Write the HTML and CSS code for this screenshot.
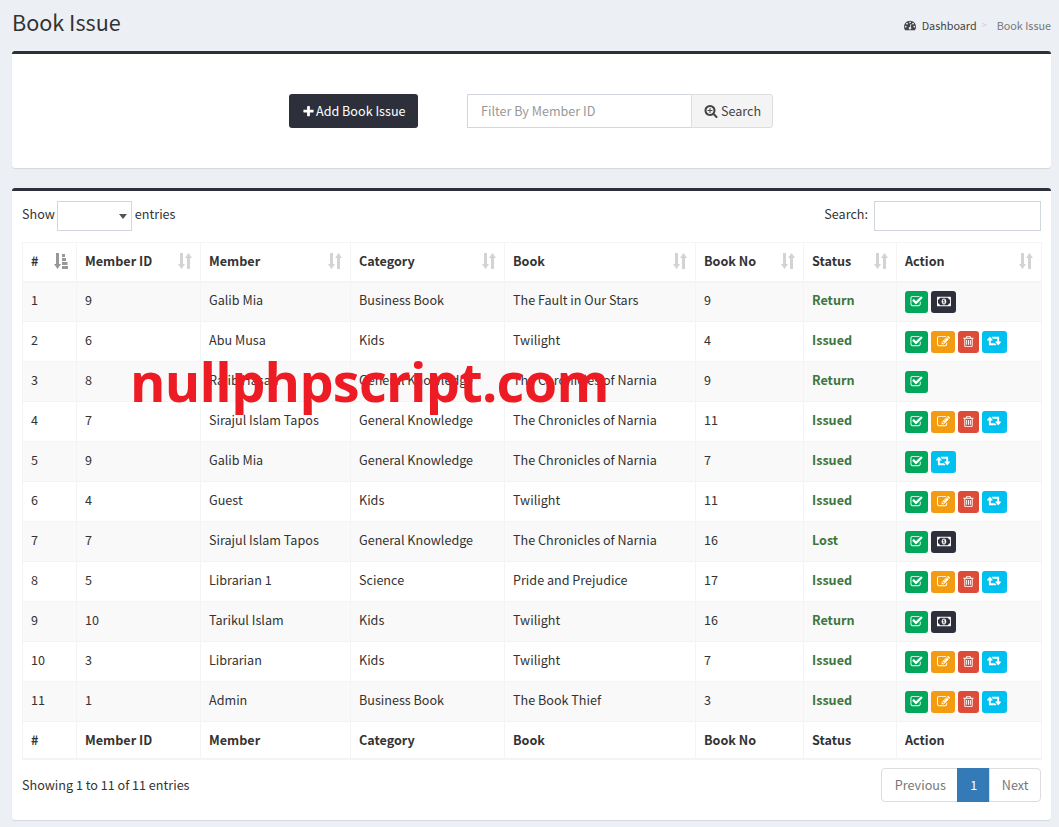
FILE: index.html
```html
<!DOCTYPE html>
<html lang="en">
<head>
  <meta charset="UTF-8">
  <meta name="viewport" content="width=device-width, initial-scale=1.0">
  <title>Book Issue</title>
  <link rel="stylesheet" href="styles.css">
</head>
<body>
  <!-- icon set, reused through <use> -->
  <svg class="defs" aria-hidden="true">
    <symbol id="i-plus" viewBox="0 0 1792 1792"><path d="M1600 736v192q0 40-28 68t-68 28h-416v416q0 40-28 68t-68 28h-192q-40 0-68-28t-28-68v-416h-416q-40 0-68-28t-28-68v-192q0-40 28-68t68-28h416v-416q0-40 28-68t68-28h192q40 0 68 28t28 68v416h416q40 0 68 28t28 68z"/></symbol>
    <symbol id="i-search" viewBox="0 0 1792 1792"><path d="M1088 800v64q0 13-9.5 22.5t-22.5 9.5h-224v224q0 13-9.5 22.5t-22.5 9.5h-64q-13 0-22.5-9.5t-9.5-22.5v-224h-224q-13 0-22.5-9.5t-9.5-22.5v-64q0-13 9.5-22.5t22.5-9.5h224v-224q0-13 9.5-22.5t22.5-9.5h64q13 0 22.5 9.5t9.5 22.5v224h224q13 0 22.5 9.5t9.5 22.5zm128 32q0-185-131.5-316.5t-316.5-131.5-316.5 131.5-131.5 316.5 131.5 316.5 316.5 131.5 316.5-131.5 131.5-316.5zm512 832q0 53-37.5 90.5t-90.5 37.5q-54 0-90-38l-343-342q-179 124-399 124-143 0-273.5-55.5t-225-150-150-225-55.5-273.5 55.5-273.5 150-225 225-150 273.5-55.5 273.5 55.5 225 150 150 225 55.5 273.5q0 220-124 399l343 343q37 37 37 90z"/></symbol>
    <symbol id="i-dash" viewBox="0 0 1792 1792"><path d="M384 1152q0-53-37.5-90.5t-90.5-37.5-90.5 37.5-37.5 90.5 37.5 90.5 90.5 37.5 90.5-37.5 37.5-90.5zm192-448q0-53-37.5-90.5t-90.5-37.5-90.5 37.5-37.5 90.5 37.5 90.5 90.5 37.5 90.5-37.5 37.5-90.5zm428 506l101-382q6-26-7.5-48.5t-38.5-29.5-48 6.5-30 39.5l-101 382q-60 5-107 43.5t-63 98.5q-20 77 20 146t117 89 146-20 89-117q16-60-6-117t-72-91zm660-58q0-53-37.5-90.5t-90.5-37.5-90.5 37.5-37.5 90.5 37.5 90.5 90.5 37.5 90.5-37.5 37.5-90.5zm-640-640q0-53-37.5-90.5t-90.5-37.5-90.5 37.5-37.5 90.5 37.5 90.5 90.5 37.5 90.5-37.5 37.5-90.5zm448 192q0-53-37.5-90.5t-90.5-37.5-90.5 37.5-37.5 90.5 37.5 90.5 90.5 37.5 90.5-37.5 37.5-90.5zm320 448q0 261-141 483-19 29-54 29h-1402q-35 0-54-29-141-221-141-483 0-182 71-348t191-286 286-191 348-71 348 71 286 191 191 286 71 348z"/></symbol>
    <symbol id="i-check" viewBox="0 0 1792 1792"><path d="M1472 930v318q0 119-84.5 203.5t-203.5 84.5h-832q-119 0-203.5-84.5t-84.5-203.5v-832q0-119 84.5-203.5t203.5-84.5h832q63 0 117 25 15 7 18 23 3 17-9 29l-49 49q-10 10-23 10-3 0-9-2-23-6-45-6h-832q-66 0-113 47t-47 113v832q0 66 47 113t113 47h832q66 0 113-47t47-113v-254q0-13 9-22l64-64q10-10 23-10 6 0 12 3 20 8 20 29zm231-489l-814 814q-24 24-57 24t-57-24l-430-430q-24-24-24-57t24-57l110-110q24-24 57-24t57 24l263 263 647-647q24-24 57-24t57 24l110 110q24 24 24 57t-24 57z"/></symbol>
    <symbol id="i-edit" viewBox="0 0 1792 1792"><path d="M888 1184l116-116-152-152-116 116v56h96v96h56zm440-720q-16-16-33 1l-350 350q-17 17-1 33t33-1l350-350q17-17 1-33zm80 594v190q0 119-84.5 203.5t-203.5 84.5h-832q-119 0-203.5-84.5t-84.5-203.5v-832q0-119 84.5-203.5t203.5-84.5h832q63 0 117 25 15 7 18 23 3 17-9 29l-49 49q-14 14-32 8-23-6-45-6h-832q-66 0-113 47t-47 113v832q0 66 47 113t113 47h832q66 0 113-47t47-113v-126q0-13 9-22l64-64q15-15 35-7t20 29zm-96-738l288 288-672 672h-288v-288zm444 132l-92 92-288-288 92-92q28-28 68-28t68 28l152 152q28 28 28 68t-28 68z"/></symbol>
    <symbol id="i-trash" viewBox="0 0 1792 1792"><path d="M704 736v576q0 14-9 23t-23 9h-64q-14 0-23-9t-9-23v-576q0-14 9-23t23-9h64q14 0 23 9t9 23zm256 0v576q0 14-9 23t-23 9h-64q-14 0-23-9t-9-23v-576q0-14 9-23t23-9h64q14 0 23 9t9 23zm256 0v576q0 14-9 23t-23 9h-64q-14 0-23-9t-9-23v-576q0-14 9-23t23-9h64q14 0 23 9t9 23zm128 724v-948h-896v948q0 22 7 40.5t14.5 27 10.5 8.5h832q3 0 10.5-8.5t14.5-27 7-40.5zm-672-1076h448l-48-117q-7-9-17-11h-317q-10 2-17 11zm928 32v64q0 14-9 23t-23 9h-96v948q0 83-47 143.5t-113 60.5h-832q-66 0-113-58.5t-47-141.5v-952h-96q-14 0-23-9t-9-23v-64q0-14 9-23t23-9h309l70-167q15-37 54-63t79-26h320q40 0 79 26t54 63l70 167h309q14 0 23 9t9 23z"/></symbol>
    <symbol id="i-retweet" viewBox="0 0 1920 1792"><path d="M1216 1376q0 13-9.5 22.5t-22.5 9.5h-960q-8 0-13.5-2t-9-7-5.5-8-3-11.5-1-11.5v-600h-192q-26 0-45-19t-19-45q0-24 15-41l320-384q19-22 49-22t49 22l320 384q15 17 15 41 0 26-19 45t-45 19h-192v384h576q16 0 25 11l160 192q7 10 7 21zm640-416q0 24-15 41l-320 384q-20 23-49 23t-49-23l-320-384q-15-17-15-41 0-26 19-45t45-19h192v-384h-576q-16 0-25-12l-160-192q-7-9-7-20 0-13 9.5-22.5t22.5-9.5h960q8 0 13.5 2t9 7 5.5 8 3 11.5 1 11.5v600h192q26 0 45 19t19 45z"/></symbol>
    <symbol id="i-money" viewBox="0 0 1920 1792"><path d="M832 1152h384v-96h-128v-448h-114l-148 137 77 80q42-37 55-57h2v288h-128v96zm512-256q0 70-21 142t-59.500 134-101.500 101-138 39-138-39-101.500-101-59.500-134-21-142 21-142 59.500-134 101.500-101 138-39 138 39 101.500 101 59.500 134 21 142zm512 256v-512q-106 0-181-75t-75-181h-1152q0 106-75 181t-181 75v512q106 0 181 75t75 181h1152q0-106 75-181t181-75zm128-832v1152q0 26-19 45t-45 19h-1792q-26 0-45-19t-19-45v-1152q0-26 19-45t45-19h1792q26 0 45 19t19 45z"/></symbol>
    <symbol id="i-sort" viewBox="0 0 14 16"><path d="M2 0h3v11h2L3.500 16 0 11h2zM9 16h3V5h2L10.500 0 7 5h2z"/></symbol>
    <symbol id="i-sort-asc" viewBox="0 0 14 16"><path d="M2 0h3v11h2L3.500 16 0 11h2zM8 1h3v3H8zM8 5h4v3H8zM8 9h5.500v3H8zM8 13h6v3H8z"/></symbol>
  </svg>

  <section class="page-head">
    <h1>Book Issue</h1>
    <ol class="breadcrumb">
      <li><a href="#"><svg class="ico ico-dash"><use href="#i-dash"/></svg>Dashboard</a></li>
      <li class="sep">&gt;</li>
      <li class="current">Book Issue</li>
    </ol>
  </section>

  <div class="box box-filter">
    <a class="btn-add" href="#"><svg class="ico ico-plus"><use href="#i-plus"/></svg>Add Book Issue</a>
    <form class="filter">
      <input type="text" placeholder="Filter By Member ID">
      <button type="button"><svg class="ico ico-search"><use href="#i-search"/></svg>Search</button>
    </form>
  </div>

  <div class="box box-table">
    <div class="tools">
      <label>Show <span class="select"><select><option></option></select></span> entries</label>
      <label class="tools-search">Search: <input type="search"></label>
    </div>

    <table>
      <colgroup>
        <col class="c-no"><col class="c-mid"><col class="c-member"><col class="c-cat">
        <col class="c-book"><col class="c-bno"><col class="c-status"><col class="c-action">
      </colgroup>
      <thead>
        <tr>
          <th><span class="th-in">#<svg class="sort sorted"><use href="#i-sort-asc"/></svg></span></th>
          <th><span class="th-in">Member ID<svg class="sort"><use href="#i-sort"/></svg></span></th>
          <th><span class="th-in">Member<svg class="sort"><use href="#i-sort"/></svg></span></th>
          <th><span class="th-in">Category<svg class="sort"><use href="#i-sort"/></svg></span></th>
          <th><span class="th-in">Book<svg class="sort"><use href="#i-sort"/></svg></span></th>
          <th><span class="th-in">Book No<svg class="sort"><use href="#i-sort"/></svg></span></th>
          <th><span class="th-in">Status<svg class="sort"><use href="#i-sort"/></svg></span></th>
          <th><span class="th-in">Action<svg class="sort"><use href="#i-sort"/></svg></span></th>
        </tr>
      </thead>
      <tbody>
        <tr>
          <td>1</td><td>9</td><td>Galib Mia</td><td>Business Book</td><td>The Fault in Our Stars</td><td>9</td>
          <td class="status">Return</td>
          <td><div class="acts">
            <a class="act green"><svg><use href="#i-check"/></svg></a>
            <a class="act dark"><svg class="money"><use href="#i-money"/></svg></a>
          </div></td>
        </tr>
        <tr>
          <td>2</td><td>6</td><td>Abu Musa</td><td>Kids</td><td>Twilight</td><td>4</td>
          <td class="status">Issued</td>
          <td><div class="acts">
            <a class="act green"><svg><use href="#i-check"/></svg></a>
            <a class="act orange"><svg><use href="#i-edit"/></svg></a>
            <a class="act red"><svg><use href="#i-trash"/></svg></a>
            <a class="act blue"><svg class="retweet"><use href="#i-retweet"/></svg></a>
          </div></td>
        </tr>
        <tr>
          <td>3</td><td>8</td><td>Rajib Hasan</td><td>General Knowledge</td><td>The Chronicles of Narnia</td><td>9</td>
          <td class="status">Return</td>
          <td><div class="acts">
            <a class="act green"><svg><use href="#i-check"/></svg></a>
          </div></td>
        </tr>
        <tr>
          <td>4</td><td>7</td><td>Sirajul Islam Tapos</td><td>General Knowledge</td><td>The Chronicles of Narnia</td><td>11</td>
          <td class="status">Issued</td>
          <td><div class="acts">
            <a class="act green"><svg><use href="#i-check"/></svg></a>
            <a class="act orange"><svg><use href="#i-edit"/></svg></a>
            <a class="act red"><svg><use href="#i-trash"/></svg></a>
            <a class="act blue"><svg class="retweet"><use href="#i-retweet"/></svg></a>
          </div></td>
        </tr>
        <tr>
          <td>5</td><td>9</td><td>Galib Mia</td><td>General Knowledge</td><td>The Chronicles of Narnia</td><td>7</td>
          <td class="status">Issued</td>
          <td><div class="acts">
            <a class="act green"><svg><use href="#i-check"/></svg></a>
            <a class="act blue"><svg class="retweet"><use href="#i-retweet"/></svg></a>
          </div></td>
        </tr>
        <tr>
          <td>6</td><td>4</td><td>Guest</td><td>Kids</td><td>Twilight</td><td>11</td>
          <td class="status">Issued</td>
          <td><div class="acts">
            <a class="act green"><svg><use href="#i-check"/></svg></a>
            <a class="act orange"><svg><use href="#i-edit"/></svg></a>
            <a class="act red"><svg><use href="#i-trash"/></svg></a>
            <a class="act blue"><svg class="retweet"><use href="#i-retweet"/></svg></a>
          </div></td>
        </tr>
        <tr>
          <td>7</td><td>7</td><td>Sirajul Islam Tapos</td><td>General Knowledge</td><td>The Chronicles of Narnia</td><td>16</td>
          <td class="status">Lost</td>
          <td><div class="acts">
            <a class="act green"><svg><use href="#i-check"/></svg></a>
            <a class="act dark"><svg class="money"><use href="#i-money"/></svg></a>
          </div></td>
        </tr>
        <tr>
          <td>8</td><td>5</td><td>Librarian 1</td><td>Science</td><td>Pride and Prejudice</td><td>17</td>
          <td class="status">Issued</td>
          <td><div class="acts">
            <a class="act green"><svg><use href="#i-check"/></svg></a>
            <a class="act orange"><svg><use href="#i-edit"/></svg></a>
            <a class="act red"><svg><use href="#i-trash"/></svg></a>
            <a class="act blue"><svg class="retweet"><use href="#i-retweet"/></svg></a>
          </div></td>
        </tr>
        <tr>
          <td>9</td><td>10</td><td>Tarikul Islam</td><td>Kids</td><td>Twilight</td><td>16</td>
          <td class="status">Return</td>
          <td><div class="acts">
            <a class="act green"><svg><use href="#i-check"/></svg></a>
            <a class="act dark"><svg class="money"><use href="#i-money"/></svg></a>
          </div></td>
        </tr>
        <tr>
          <td>10</td><td>3</td><td>Librarian</td><td>Kids</td><td>Twilight</td><td>7</td>
          <td class="status">Issued</td>
          <td><div class="acts">
            <a class="act green"><svg><use href="#i-check"/></svg></a>
            <a class="act orange"><svg><use href="#i-edit"/></svg></a>
            <a class="act red"><svg><use href="#i-trash"/></svg></a>
            <a class="act blue"><svg class="retweet"><use href="#i-retweet"/></svg></a>
          </div></td>
        </tr>
        <tr>
          <td>11</td><td>1</td><td>Admin</td><td>Business Book</td><td>The Book Thief</td><td>3</td>
          <td class="status">Issued</td>
          <td><div class="acts">
            <a class="act green"><svg><use href="#i-check"/></svg></a>
            <a class="act orange"><svg><use href="#i-edit"/></svg></a>
            <a class="act red"><svg><use href="#i-trash"/></svg></a>
            <a class="act blue"><svg class="retweet"><use href="#i-retweet"/></svg></a>
          </div></td>
        </tr>
      </tbody>
      <tfoot>
        <tr>
          <th>#</th><th>Member ID</th><th>Member</th><th>Category</th><th>Book</th><th>Book No</th><th>Status</th><th>Action</th>
        </tr>
      </tfoot>
    </table>

    <div class="table-foot">
      <div class="info">Showing 1 to 11 of 11 entries</div>
      <ul class="pager">
        <li><a href="#">Previous</a></li>
        <li class="active"><a href="#">1</a></li>
        <li><a href="#">Next</a></li>
      </ul>
    </div>
  </div>

  <!-- stamped over the screenshot -->
  <div class="watermark">nullphpscript.com</div>
</body>
</html>
```

FILE: styles.css
```css
* {
  box-sizing: border-box;
}
html, body {
  height: 827px;
  overflow: hidden;
}
body {
  position: relative;
  margin: 0;
  padding: 0 8px 0 12px;
  background-color: #ecf0f5;
  color: #333;
  font-family: "Noto Sans CJK SC", "Source Sans Pro", "Open Sans", sans-serif;
  font-size: 12.6px;
  line-height: 20px;
}
a {
  color: inherit;
  text-decoration: none;
}
.defs {
  display: none;
}
.ico {
  fill: currentColor;
  flex: none;
}

/* page heading */
.page-head {
  display: flex;
  justify-content: space-between;
  align-items: center;
  height: 51px;
  padding-bottom: 7px;
}
h1 {
  margin: 0;
  font-size: 21.6px;
  font-weight: 400;
  line-height: 26px;
}
.breadcrumb {
  display: flex;
  align-items: center;
  list-style: none;
  margin: 5px 0 0;
  padding: 0;
  font-size: 10.8px;
  line-height: 16px;
  color: #444;
}
.breadcrumb a {
  display: flex;
  align-items: center;
}
.ico-dash {
  width: 12px;
  height: 12px;
  margin-right: 6px;
}
.breadcrumb .sep {
  margin: 0 10px 0 5px;
  color: #ccc;
  font-size: 9px;
}
.breadcrumb .current {
  color: #777;
}

/* boxes */
.box {
  background: #fff;
  border-top: 3px solid #2d303b;
  border-radius: 3px;
  box-shadow: 0 1px 1px rgba(0, 0, 0, 0.1);
}
.box-filter {
  display: flex;
  justify-content: center;
  align-items: flex-start;
  gap: 49px;
  height: 117px;
  padding: 40px 1px 0 0;
  margin-bottom: 20px;
}
.btn-add {
  display: flex;
  align-items: center;
  width: 129px;
  height: 34px;
  padding-left: 13px;
  background: #2d303b;
  border-radius: 3px;
  color: #fff;
}
.ico-plus {
  width: 13px;
  height: 13px;
  margin-right: 1px;
}
.filter {
  display: flex;
  margin: 0;
}
.filter input {
  width: 224px;
  height: 34px;
  padding: 5px 13px 7px;
  border: 1px solid #d2d6de;
  border-right: 0;
  font: inherit;
  color: #555;
  outline: none;
}
.filter input::placeholder {
  color: #999;
}
.filter button {
  display: flex;
  align-items: center;
  width: 82px;
  height: 34px;
  padding: 0 12px;
  background: #f4f4f4;
  border: 1px solid #ddd;
  border-radius: 0 3px 3px 0;
  color: #444;
  font: inherit;
}
.ico-search {
  width: 14px;
  height: 14px;
  margin-right: 3px;
}

/* table box */
.box-table {
  height: 632px;
  padding: 10px;
}
.tools {
  display: flex;
  justify-content: space-between;
  margin-bottom: 11px;
}
.tools label {
  display: flex;
  align-items: flex-start;
  gap: 2px;
  line-height: 26px;
}
.select {
  position: relative;
  display: block;
  margin-right: 1px;
}
.select::after {
  content: "";
  position: absolute;
  right: 5px;
  top: 13px;
  border: 4px solid transparent;
  border-top: 5px solid #555;
  border-bottom: 0;
}
.tools select {
  display: block;
  width: 75px;
  height: 30px;
  border: 1px solid #d2d6de;
  background: #fff;
  border-radius: 0;
  font: inherit;
  appearance: none;
}
.tools-search input {
  width: 167px;
  height: 30px;
  margin-left: 4px;
  border: 1px solid #d2d6de;
  outline: none;
}

table {
  width: 1019px;
  table-layout: fixed;
  border-collapse: collapse;
  border: 1px solid #f4f4f4;
}
.c-no { width: 54px; }
.c-mid { width: 124px; }
.c-member { width: 150px; }
.c-cat { width: 154px; }
.c-book { width: 191px; }
.c-bno { width: 108px; }
.c-status { width: 93px; }
.c-action { width: 145px; }

th, td {
  height: 40px;
  padding: 0 8px;
  border: 1px solid #f4f4f4;
  text-align: left;
  vertical-align: middle;
}
td {
  padding-bottom: 4px;
}
th {
  font-weight: 700;
}
thead th {
  height: 39px;
  padding-bottom: 1px;
  border-bottom-width: 2px;
}
tfoot th {
  height: 37px;
  border-bottom-width: 2px;
}
tbody tr:nth-child(odd) {
  background-color: #f9f9f9;
}
.status {
  color: #3c763d;
  font-weight: 700;
}
.th-in {
  display: flex;
  justify-content: space-between;
  align-items: center;
}
.sort {
  width: 14px;
  height: 16px;
  fill: #000;
  opacity: 0.17;
}
.sort.sorted {
  opacity: 0.4;
}

/* action buttons */
.acts {
  display: flex;
  gap: 3px;
  margin-top: 4px;
}
.act {
  display: flex;
  align-items: center;
  justify-content: center;
  width: 23px;
  height: 22px;
  border-radius: 3px;
  color: #fff;
}
.act svg {
  width: 13px;
  height: 13px;
  fill: currentColor;
}
.act .retweet {
  width: 15px;
}
.act .money {
  width: 15px;
}
.green { background: #00a65a; }
.dark { background: #2d303b; width: 25px; }
.orange { background: #f39c12; width: 24px; }
.red { background: #dd4b39; width: 21px; }
.blue { background: #00c0ef; width: 25px; }

/* info and pagination */
.table-foot {
  display: flex;
  justify-content: space-between;
  align-items: flex-start;
  margin-top: 8px;
}
.info {
  padding-top: 7px;
}
.pager {
  display: flex;
  list-style: none;
  margin: 0;
  padding: 0;
}
.pager a {
  display: block;
  height: 34px;
  padding: 6px 11.5px;
  border: 1px solid #ddd;
  margin-left: -1px;
  background: #fff;
  color: #777;
}
.pager li:first-child a {
  padding-left: 12.5px;
  border-radius: 4px 0 0 4px;
  margin-left: 0;
}
.pager li:last-child a {
  border-radius: 0 4px 4px 0;
}
.pager .active a {
  width: 33px;
  text-align: center;
  background: #337ab7;
  border-color: #337ab7;
  color: #fff;
}

.watermark {
  position: absolute;
  left: 130px;
  top: 341px;
  color: #ed1c24;
  font-family: "Open Sans", sans-serif;
  font-size: 54px;
  font-weight: 700;
  letter-spacing: -0.7px;
  line-height: 80px;
  white-space: nowrap;
}
```
